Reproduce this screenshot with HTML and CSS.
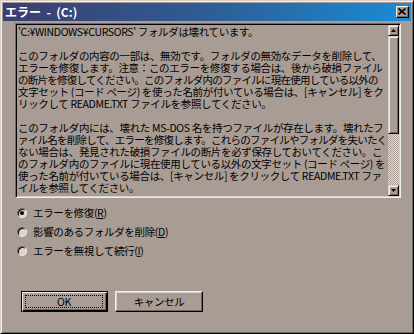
FILE: index.html
```html
<!DOCTYPE html>
<html lang="ja">
<head>
<meta charset="utf-8">
<title>エラー - (C:)</title>
<link rel="stylesheet" href="styles.css">
</head>
<body>
<div class="window">
  <div class="titlebar">
    <span class="title">エラー  -  (C:)</span>
    <span class="close"><svg width="8" height="7" viewBox="0 0 8 7"><path d="M0.5 0.5 L7.5 6.5 M7.5 0.5 L0.5 6.5" stroke="#000" stroke-width="1.6" fill="none"/></svg></span>
  </div>
  <div class="content">
    <div class="textbox">
      <div class="text">
        <span class="line">'C:¥WINDOWS¥CURSORS' フォルダは壊れています。</span>
        <span class="line">&nbsp;</span>
        <span class="line">このフォルダの内容の一部は、無効です。フォルダの無効なデータを削除して、</span>
        <span class="line">エラーを修復します。注意：このエラーを修復する場合は、後から破損ファイル</span>
        <span class="line tight">の断片を修復してください。このフォルダ内のファイルに現在使用している以外の</span>
        <span class="line">文字セット (コード ページ) を使った名前が付いている場合は、[キャンセル] をク</span>
        <span class="line">リックして README.TXT ファイルを参照してください。</span>
        <span class="line">&nbsp;</span>
        <span class="line">このフォルダ内には、壊れた MS-DOS 名を持つファイルが存在します。壊れたフ</span>
        <span class="line tight">ァイル名を削除して、エラーを修復します。これらのファイルやフォルダを失いたく</span>
        <span class="line">ない場合は、発見された破損ファイルの断片を必ず保存しておいてください。こ</span>
        <span class="line">のフォルダ内のファイルに現在使用している以外の文字セット (コード ページ) を</span>
        <span class="line">使った名前が付いている場合は、[キャンセル] をクリックして README.TXT ファ</span>
        <span class="line">イルを参照してください。</span>
      </div>
      <div class="scrollbar">
        <div class="sb-btn"><svg width="5" height="3" viewBox="0 0 5 3"><path d="M2.5 0 L5 3 L0 3 Z" fill="#000"/></svg></div>
        <div class="thumb"></div>
        <div class="track"></div>
        <div class="sb-btn"><svg width="5" height="3" viewBox="0 0 5 3"><path d="M0 0 L5 0 L2.5 3 Z" fill="#000"/></svg></div>
      </div>
    </div>
    <div class="options">
      <div class="option"><span class="radio checked"></span><span class="label">エラーを修復(<u>R</u>)</span></div>
      <div class="option"><span class="radio"></span><span class="label">影響のあるフォルダを削除(<u>D</u>)</span></div>
      <div class="option"><span class="radio"></span><span class="label">エラーを無視して続行(<u>I</u>)</span></div>
    </div>
    <div class="buttons">
      <div class="btn default"><span class="focus">OK</span></div>
      <div class="btn">キャンセル</div>
    </div>
  </div>
</div>
</body>
</html>
```
FILE: styles.css
```css
* { box-sizing: border-box; }
html, body { margin: 0; padding: 0; background: #a99c94; }
body {
  font-family: "Noto Sans CJK JP", "Noto Sans", sans-serif;
  font-size: 10.5px;
  letter-spacing: -0.35px;
  color: #000;
}
.window {
  width: 414px;
  height: 334px;
  background: #a99c94;
  border: 1px solid;
  border-color: #d8d0ca #000 #000 #d8d0ca;
  padding: 2px;
  box-shadow: inset 1px 1px #f2eee9, inset -1px -1px #726862;
  display: flex;
  flex-direction: column;
}
.titlebar {
  height: 18px;
  display: flex;
  align-items: center;
  justify-content: space-between;
  padding: 0 2px 0 2px;
  background: linear-gradient(to right, #3c3e6f 0%, #2e5d94 50%, #1a8cd6 100%);
}
.title {
  color: #fff;
  font-weight: bold;
  font-size: 12px;
  letter-spacing: 0;
  white-space: pre;
  line-height: 18px;
}
.close {
  width: 13px;
  height: 12px;
  margin-top: -1px;
  background: #a99c94;
  border: 1px solid;
  border-color: #f2eee9 #000 #000 #f2eee9;
  box-shadow: inset -1px -1px #726862;
  display: flex;
  align-items: center;
  justify-content: center;
  padding: 0 1px 1px 0;
}
.close svg { display: block; }
.content {
  flex: 1;
  display: flex;
  flex-direction: column;
  padding: 2px 10px 0 12px;
}
.textbox {
  height: 175px;
  border: 1px solid;
  border-color: #726862 #f2eee9 #f2eee9 #726862;
  box-shadow: inset 1px 1px #000, inset -1px -1px #d8d0ca;
  padding: 1px;
  display: flex;
}
.text {
  flex: 1;
  min-width: 0;
  padding: 1px 0 0 1px;
}
.line {
  display: block;
  height: 12px;
  line-height: 12px;
  white-space: nowrap;
}
.line.tight { letter-spacing: -0.75px; }
.scrollbar {
  width: 11px;
  flex: none;
  display: flex;
  flex-direction: column;
  position: relative;
  z-index: 1;
}
.sb-btn, .thumb {
  background: #a99c94;
  border: 1px solid;
  border-color: #d8d0ca #000 #000 #d8d0ca;
  box-shadow: inset 1px 1px #f2eee9, inset -1px -1px #726862;
}
.sb-btn {
  height: 11px;
  display: flex;
  align-items: center;
  justify-content: center;
}
.sb-btn svg { display: block; }
.thumb { height: 98px; }
.track {
  flex: 1;
  background: repeating-conic-gradient(#e2dbd5 0 25%, #a99c94 0 50%) 0 0 / 2px 2px;
}
.options {
  margin-top: 5px;
  display: flex;
  flex-direction: column;
}
.option {
  height: 19px;
  display: flex;
  align-items: center;
  padding-left: 2px;
  gap: 6px;
}
.radio {
  width: 10px;
  height: 10px;
  border-radius: 50%;
  border: 1px solid;
  border-color: #726862 #f2eee9 #f2eee9 #726862;
  background: #ddd6d0;
  box-shadow: inset 1px 1px #000;
  display: flex;
  align-items: center;
  justify-content: center;
}
.radio.checked::after {
  content: "";
  width: 4px;
  height: 4px;
  border-radius: 50%;
  background: #000;
}
.label { line-height: 12px; white-space: nowrap; }
.label u { text-underline-offset: 1px; }
.buttons {
  margin-top: 31px;
  padding-left: 6px;
  display: flex;
  gap: 7px;
}
.btn {
  width: 88px;
  height: 21px;
  border: 1px solid;
  border-color: #f2eee9 #000 #000 #f2eee9;
  box-shadow: inset -1px -1px #726862, inset 1px 1px #d8d0ca;
  display: flex;
  align-items: center;
  justify-content: center;
  line-height: 12px;
}
.btn.default {
  width: 87px;
  border: 1px solid #000;
  box-shadow: inset 1px 1px #f2eee9, inset -1px -1px #000, inset -2px -2px #726862;
  padding: 3px 4px 3px 3px;
}
.focus {
  flex: 1;
  align-self: stretch;
  border: 1px dotted #000;
  display: flex;
  align-items: center;
  justify-content: center;
}
```
